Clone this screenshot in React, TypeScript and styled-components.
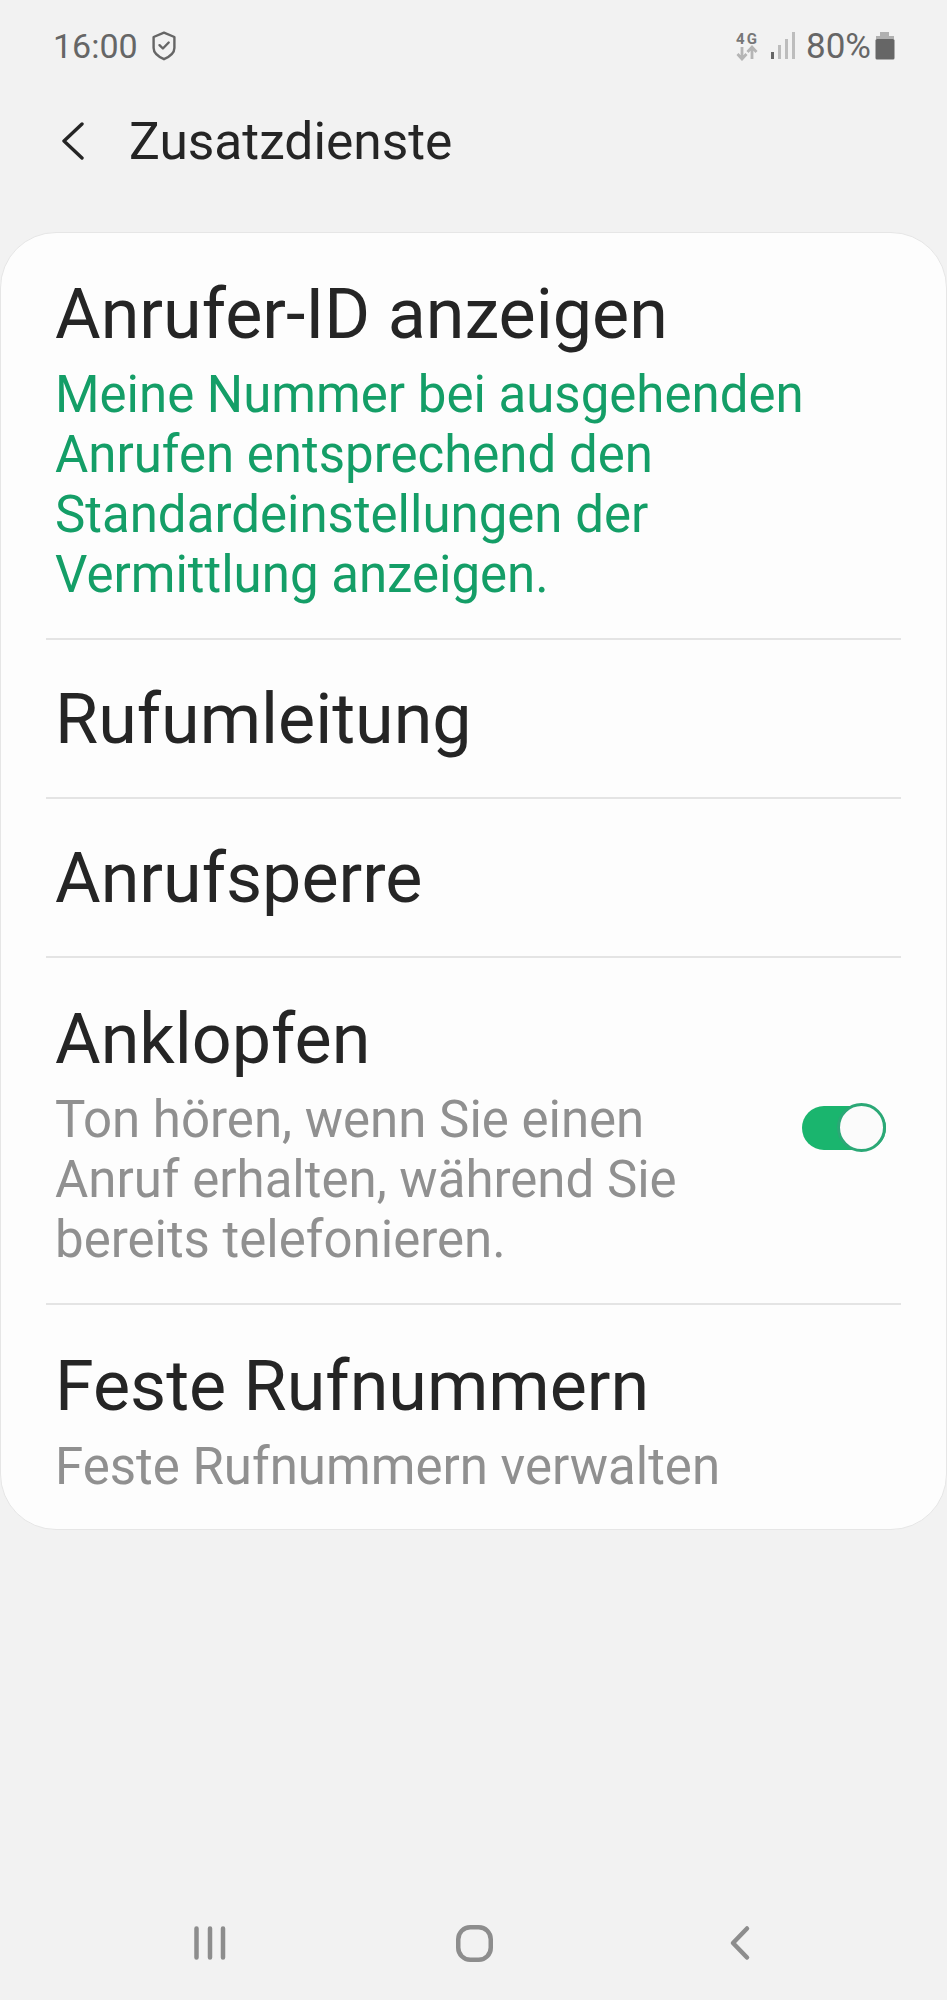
import React from "react";
import styled, { createGlobalStyle } from "styled-components";

const GlobalStyle = createGlobalStyle`
  html, body {
    margin: 0;
    padding: 0;
    background: #f2f2f2;
    font-family: Roboto, "Liberation Sans", sans-serif;
  }
`;

const Screen = styled.div`
  width: 947px;
  height: 2000px;
  display: flex;
  flex-direction: column;
  background: #f2f2f2;
  overflow: hidden;
`;

const StatusBar = styled.div`
  height: 92px;
  padding: 0 52px 0 53px;
  box-sizing: border-box;
  display: flex;
  align-items: center;
  justify-content: space-between;
`;

const StatusGroup = styled.div`
  display: flex;
  align-items: center;
`;

const Clock = styled.span`
  font-size: 34px;
  color: #666;
  margin-right: 14px;
`;

const SignalSlot = styled.span`
  display: flex;
  margin-left: 12px;
`;

const Battery = styled.span`
  font-size: 35px;
  color: #666;
  margin: 0 4px 0 9px;
`;

const Header = styled.div`
  height: 98px;
  padding-left: 58px;
  display: flex;
  align-items: center;
`;

const PageTitle = styled.h1`
  margin: 0 0 0 43px;
  font-size: 51.5px;
  font-weight: 400;
  color: #252525;
`;

const Card = styled.div`
  margin-top: 42px;
  height: 1298px;
  box-sizing: border-box;
  background: #fdfdfd;
  border: 1px solid #e6e6e6;
  border-radius: 56px;
  padding: 0 45px;
`;

const Row = styled.div<{ $plain?: boolean }>`
  display: flex;
  align-items: center;
  padding: ${(p) => (p.$plain ? "48px 10px 47px 9px" : "50px 10px 33px 9px")};
  & + & {
    border-top: 2px solid #e4e4e4;
  }
`;

const RowText = styled.div`
  flex: 1;
`;

const Title = styled.div`
  font-size: 70px;
  line-height: 62px;
  color: #252525;
`;

const Sub = styled.div<{ $accent?: boolean }>`
  margin-top: 20px;
  font-size: 51px;
  line-height: 60px;
  color: ${(p) => (p.$accent ? "#149e67" : "#909090")};
`;

const Toggle = styled.div`
  position: relative;
  width: 84px;
  height: 44px;
  margin: 0 5px 22px 0;
  border-radius: 22px;
  background: #1ab56e;
`;

const Knob = styled.div`
  position: absolute;
  right: 0;
  top: -3px;
  width: 49px;
  height: 49px;
  box-sizing: border-box;
  border-radius: 50%;
  background: #fbfbfb;
  border: 3px solid #2ba876;
`;

const NavBar = styled.div`
  margin-top: auto;
  height: 100px;
  padding: 0 0 14px 77px;
  box-sizing: border-box;
  display: grid;
  grid-template-columns: repeat(3, 265px);
  align-items: center;
  justify-items: center;
`;

const ShieldIcon = () => (
  <svg width="24" height="30" viewBox="0 0 24 30" fill="none" stroke="#666" strokeWidth="2.4" strokeLinejoin="round" strokeLinecap="round">
    <path d="M12 1.6 22.4 6v11c0 5-4.6 8.6-10.4 11.2C6.200 25.600 1.600 22 1.600 17V6z" />
    <path d="M7.500 14.200l3.400 3.300 5.800-6" />
  </svg>
);

const NetworkIcon = () => (
  <svg width="24" height="30" viewBox="0 0 24 30">
    <text x="1" y="13" fontFamily="Roboto, sans-serif" fontWeight="700" fontSize="15" fill="#777" textLength="21">4G</text>
    <path d="M7 16v12M2.500 23 7 28l4.500-5M17 28V16M12.500 21 17 16l4.500 5" fill="none" stroke="#b5b5b5" strokeWidth="2.800" />
  </svg>
);

const SignalIcon = () => (
  <svg width="26" height="28" viewBox="0 0 26 28" fill="#bdbdbd">
    <rect x="0" y="20" width="3" height="7" fill="#666" />
    <rect x="7" y="13" width="3" height="14" />
    <rect x="14" y="7" width="3" height="20" />
    <rect x="21" y="0" width="3" height="27" />
  </svg>
);

const BatteryIcon = () => (
  <svg width="20" height="28" viewBox="0 0 20 28">
    <path d="M5 0h9v4H5z" fill="#b0b0b0" />
    <path d="M1 4h18v3H1z" fill="#b0b0b0" />
    <rect x="0.500" y="7" width="19" height="20.500" rx="1.500" fill="#666" />
  </svg>
);

const BackIcon = () => (
  <svg width="28" height="38" viewBox="0 0 28 38" fill="none" stroke="#252525" strokeWidth="3.400" strokeLinecap="round" strokeLinejoin="round">
    <path d="M24 2 6 19l18 17" />
  </svg>
);

const RecentsIcon = () => (
  <svg width="36" height="38" viewBox="0 0 36 38" stroke="#8d8d8d" strokeWidth="4.500" strokeLinecap="round">
    <path d="M4.500 4.500v29M18 4.500v29M31 4.500v29" />
  </svg>
);

const HomeIcon = () => (
  <svg width="37" height="37" viewBox="0 0 37 37" fill="none" stroke="#8d8d8d" strokeWidth="4.500">
    <rect x="2.250" y="2.250" width="32.500" height="32.500" rx="12" />
  </svg>
);

const NavBackIcon = () => (
  <svg width="24" height="38" viewBox="0 0 24 38" fill="none" stroke="#8d8d8d" strokeWidth="4.500" strokeLinecap="round" strokeLinejoin="round">
    <path d="M19 4.500 5 19l14 14.500" />
  </svg>
);

export default function App() {
  return (
    <Screen>
      <GlobalStyle />
      <StatusBar>
        <StatusGroup>
          <Clock>16:00</Clock>
          <ShieldIcon />
        </StatusGroup>
        <StatusGroup>
          <NetworkIcon />
          <SignalSlot>
            <SignalIcon />
          </SignalSlot>
          <Battery>80%</Battery>
          <BatteryIcon />
        </StatusGroup>
      </StatusBar>
      <Header>
        <BackIcon />
        <PageTitle>Zusatzdienste</PageTitle>
      </Header>
      <Card>
        <Row>
          <RowText>
            <Title>Anrufer-ID anzeigen</Title>
            <Sub $accent>
              Meine Nummer bei ausgehenden
              <br />
              Anrufen entsprechend den
              <br />
              Standardeinstellungen der
              <br />
              Vermittlung anzeigen.
            </Sub>
          </RowText>
        </Row>
        <Row $plain>
          <RowText>
            <Title>Rufumleitung</Title>
          </RowText>
        </Row>
        <Row $plain>
          <RowText>
            <Title>Anrufsperre</Title>
          </RowText>
        </Row>
        <Row>
          <RowText>
            <Title>Anklopfen</Title>
            <Sub>
              Ton hören, wenn Sie einen
              <br />
              Anruf erhalten, während Sie
              <br />
              bereits telefonieren.
            </Sub>
          </RowText>
          <Toggle>
            <Knob />
          </Toggle>
        </Row>
        <Row>
          <RowText>
            <Title>Feste Rufnummern</Title>
            <Sub>Feste Rufnummern verwalten</Sub>
          </RowText>
        </Row>
      </Card>
      <NavBar>
        <RecentsIcon />
        <HomeIcon />
        <NavBackIcon />
      </NavBar>
    </Screen>
  );
}
